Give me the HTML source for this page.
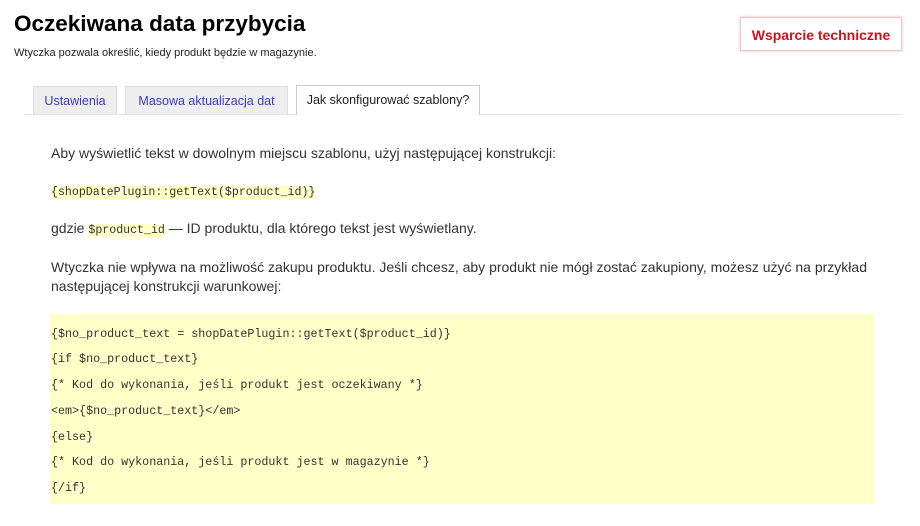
<!DOCTYPE html>
<html><head><meta charset="utf-8"><style>
body{margin:0;background:#fff;width:920px;height:526px;overflow:hidden;font-family:"Liberation Sans",sans-serif;color:#222;position:relative}
.a{position:absolute;white-space:nowrap}
h1{position:absolute;left:14px;top:11px;margin:0;font-size:22.5px;font-weight:bold;color:#000}
.sub{left:14px;top:47px;font-size:11px;color:#222}
.btn{left:740px;top:17px;width:162px;height:34px;border:1px solid #f2c4c4;box-shadow:0 0 3px #f5bcbc;color:#d0101a;font-weight:bold;font-size:14px;line-height:34px;text-align:center;box-sizing:border-box}
.line{left:24px;top:114px;width:878px;height:1px;background:#e4e4e4}
.tab{top:86px;height:28px;box-sizing:border-box;border:1px solid #ddd;border-bottom:none;background:#eee;color:#3a3acc;font-size:12.5px;line-height:28px;text-align:center}
.tab.on{top:85px;height:30px;background:#fff;color:#222;border-color:#ccc}
.p{left:51px;font-size:14px;color:#333}
.m{font-family:"Liberation Mono",monospace;font-size:11.6px;background:#ffffc8;color:#333}
.code{left:50px;top:314px;width:824px;height:190px;background:#ffffc8}
.cl{left:51px;font-family:"Liberation Mono",monospace;font-size:11.7px;color:#333}
</style></head><body>
<h1>Oczekiwana data przybycia</h1>
<div class="a sub">Wtyczka pozwala określić, kiedy produkt będzie w magazynie.</div>
<div class="a btn">Wsparcie techniczne</div>
<div class="a line"></div>
<div class="a tab" style="left:33px;width:84px">Ustawienia</div>
<div class="a tab" style="left:125px;width:163px">Masowa aktualizacja dat</div>
<div class="a tab on" style="left:296px;width:184px">Jak skonfigurować szablony?</div>
<div class="a p" style="top:145px">Aby wyświetlić tekst w dowolnym miejscu szablonu, użyj następującej konstrukcji:</div>
<div class="a p" style="top:182px"><span class="m">{shopDatePlugin::getText($product_id)}</span></div>
<div class="a p" style="top:220px">gdzie <span class="m">$product_id</span> — ID produktu, dla którego tekst jest wyświetlany.</div>
<div class="a p" style="top:258px;line-height:19px">Wtyczka nie wpływa na możliwość zakupu produktu. Jeśli chcesz, aby produkt nie mógł zostać zakupiony, możesz użyć na przykład<br>następującej konstrukcji warunkowej:</div>
<div class="a code"></div>
<div class="a cl" style="top:327px">{$no_product_text = shopDatePlugin::getText($product_id)}</div>
<div class="a cl" style="top:352px">{if $no_product_text}</div>
<div class="a cl" style="top:378px">{* Kod do wykonania, jeśli produkt jest oczekiwany *}</div>
<div class="a cl" style="top:404px">&lt;em&gt;{$no_product_text}&lt;/em&gt;</div>
<div class="a cl" style="top:430px">{else}</div>
<div class="a cl" style="top:455px">{* Kod do wykonania, jeśli produkt jest w magazynie *}</div>
<div class="a cl" style="top:481px">{/if}</div>
</body></html>
